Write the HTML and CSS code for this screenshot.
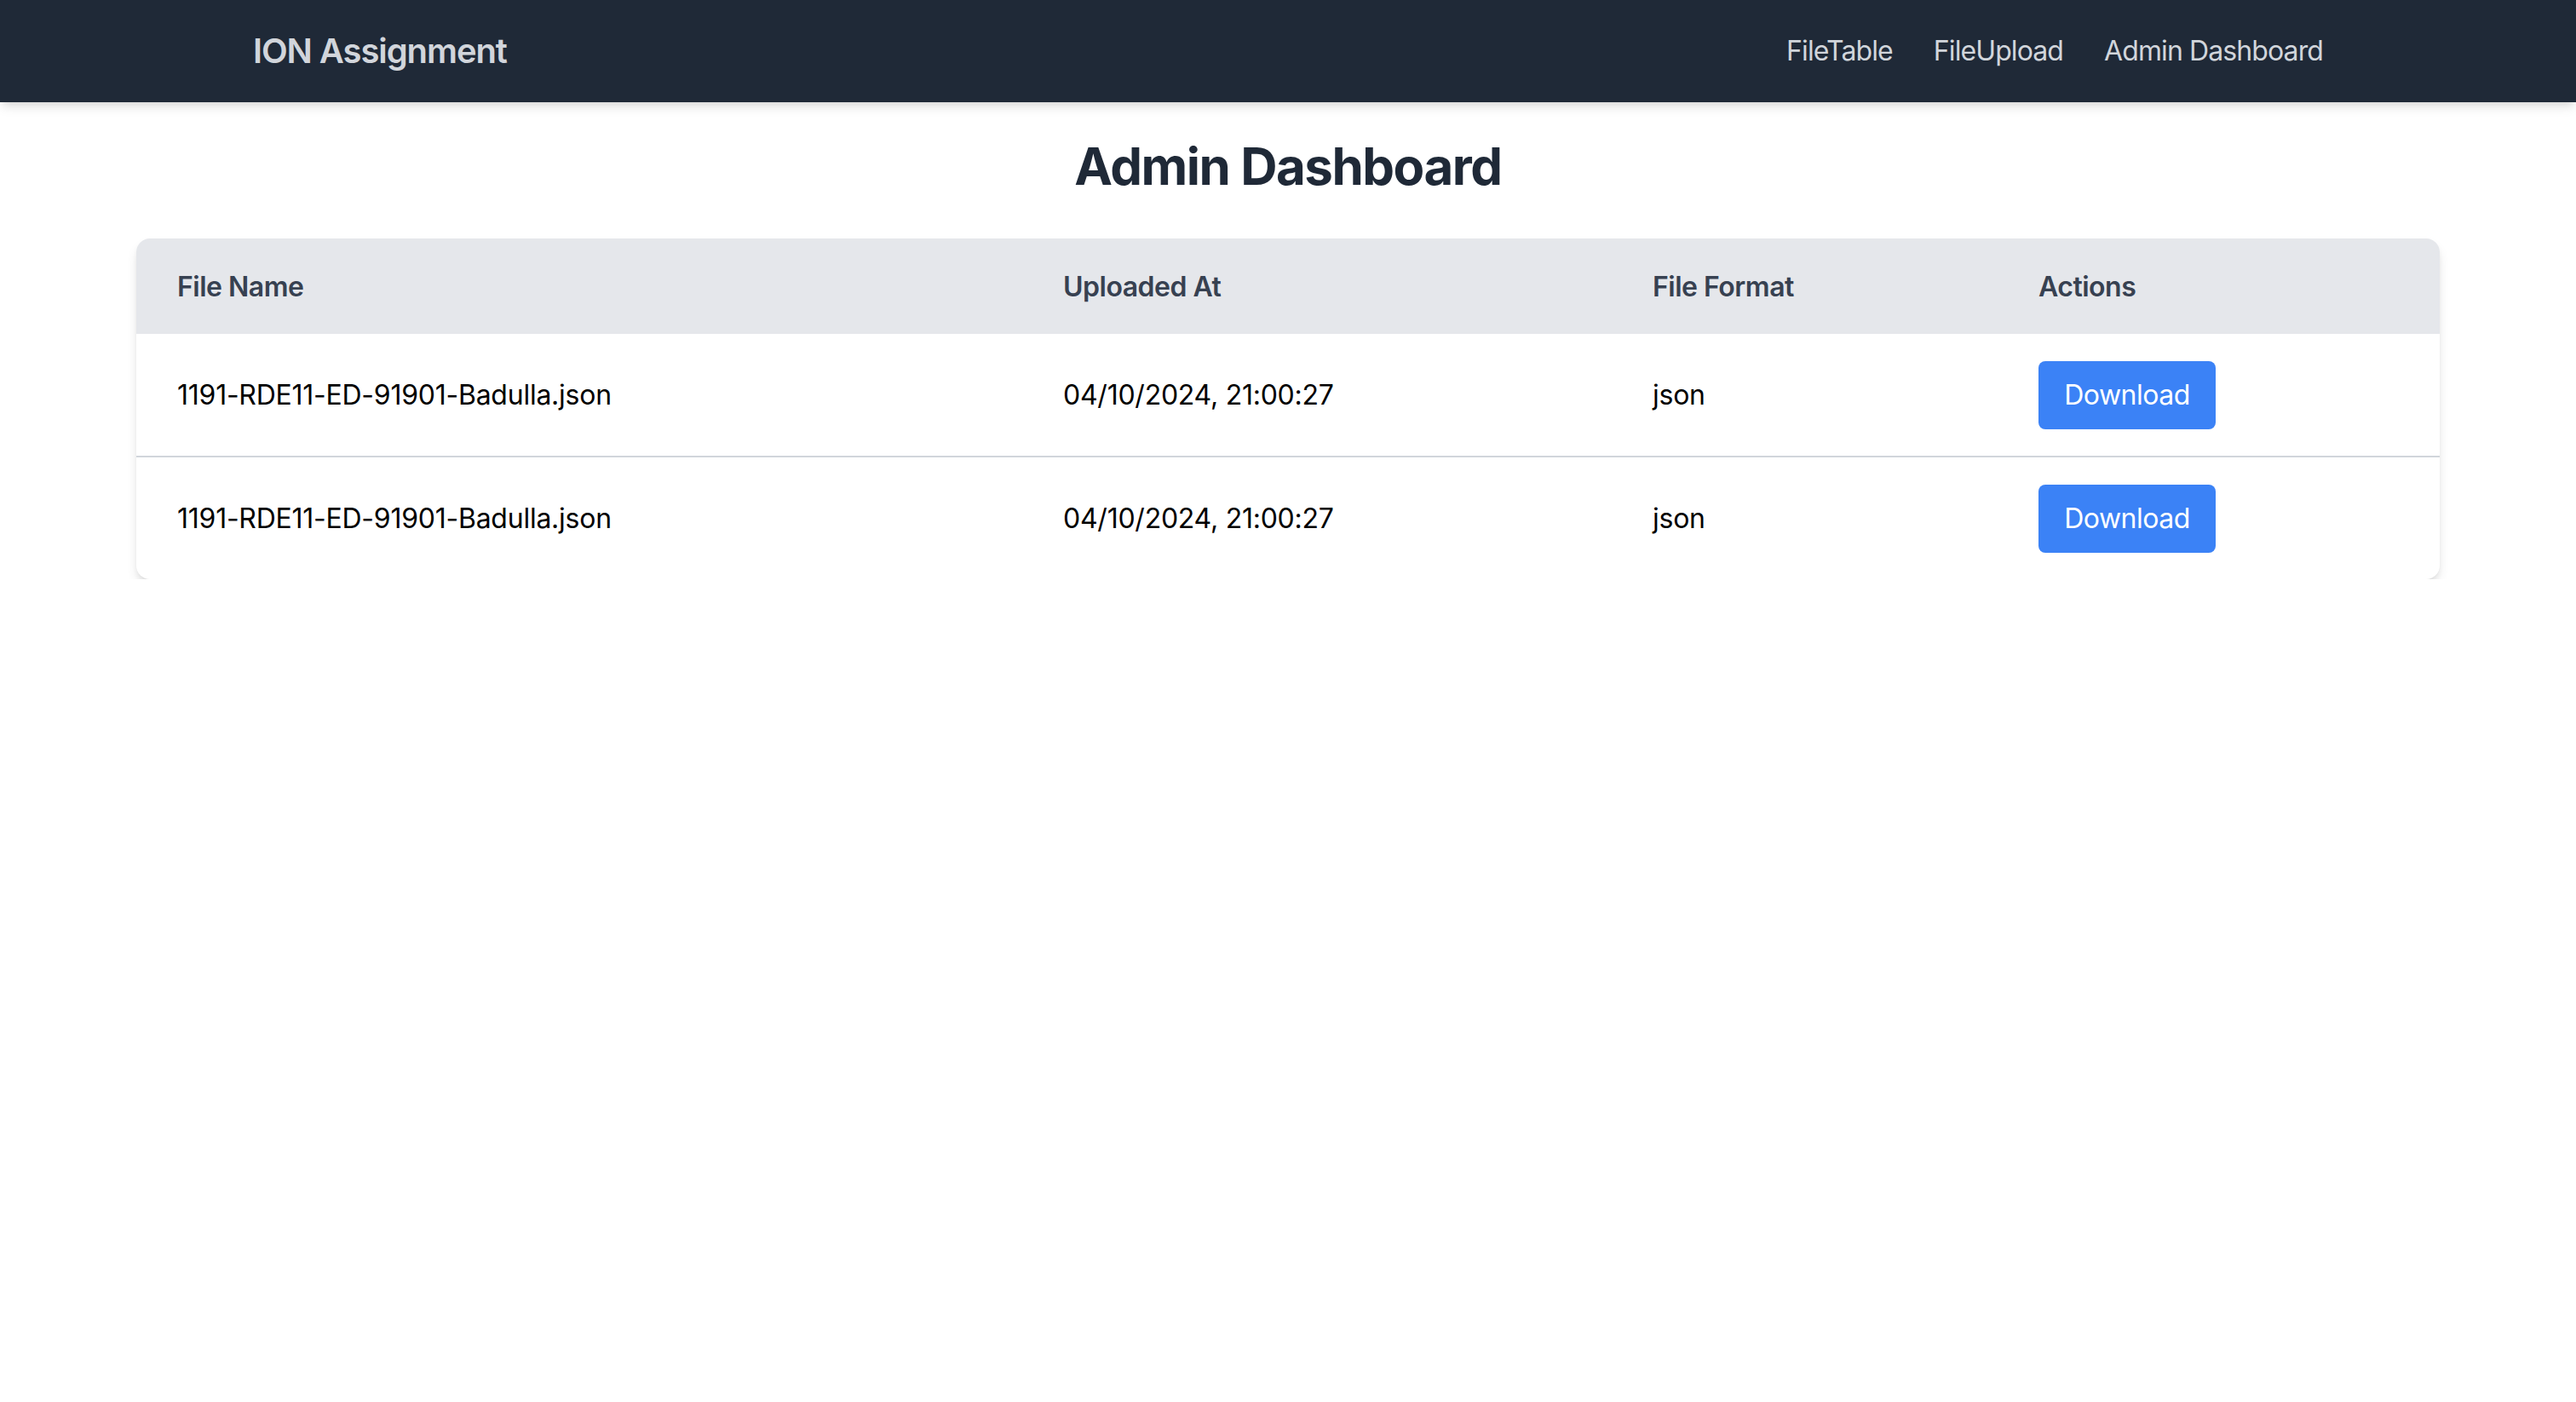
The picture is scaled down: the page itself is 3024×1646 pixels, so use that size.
FILE: index.html
```html
<!DOCTYPE html>
<html lang="en">
<head>
<meta charset="utf-8">
<title>ION Assignment</title>
<link rel="stylesheet" href="styles.css">
</head>
<body>
<nav class="navbar">
  <div class="nav-inner">
    <a class="brand" href="#">ION Assignment</a>
    <div class="nav-links">
      <a href="#">FileTable</a>
      <a href="#">FileUpload</a>
      <a href="#">Admin Dashboard</a>
    </div>
  </div>
</nav>
<main class="main">
  <h1 class="title">Admin Dashboard</h1>
  <div class="card">
    <table class="table">
      <colgroup>
        <col class="c1"><col class="c2"><col class="c3"><col class="c4">
      </colgroup>
      <thead>
        <tr>
          <th>File Name</th>
          <th>Uploaded At</th>
          <th>File Format</th>
          <th>Actions</th>
        </tr>
      </thead>
      <tbody>
        <tr>
          <td>1191-RDE11-ED-91901-Badulla.json</td>
          <td>04/10/2024, 21:00:27</td>
          <td>json</td>
          <td><button class="btn">Download</button></td>
        </tr>
        <tr>
          <td>1191-RDE11-ED-91901-Badulla.json</td>
          <td>04/10/2024, 21:00:27</td>
          <td>json</td>
          <td><button class="btn">Download</button></td>
        </tr>
      </tbody>
    </table>
  </div>
</main>
</body>
</html>
```
FILE: styles.css
```css
* { box-sizing: border-box; }
html, body { margin: 0; padding: 0; background: #ffffff; }
body { font-family: Inter, "Liberation Sans", Arial, sans-serif; color: #000; }
a { text-decoration: none; color: inherit; }

.navbar {
  background: #1f2937;
  height: 120px;
  box-shadow: 0 8px 12px -2px rgba(0,0,0,0.1), 0 4px 8px -4px rgba(0,0,0,0.1);
  position: relative;
  z-index: 1;
}
.nav-inner {
  height: 100%;
  padding: 0 297px 0 297px;
  display: flex;
  align-items: center;
  justify-content: space-between;
}
.brand {
  color: #d1d5db;
  font-size: 40px;
  font-weight: 600;
  line-height: 56px;
  letter-spacing: -1.1px;
}
.nav-links { display: flex; gap: 48px; }
.nav-links a {
  color: #d1d5db;
  font-size: 32px;
  line-height: 48px;
  letter-spacing: -0.9px;
}

.main { padding: 39px 160px 0 160px; }
.title {
  margin: 0 0 49px 0;
  text-align: center;
  font-size: 60px;
  line-height: 72px;
  font-weight: 700;
  color: #1f2937;
  letter-spacing: -1.5px;
}
.card {
  background: #fff;
  border-radius: 16px;
  overflow: hidden;
  box-shadow: 0 8px 14px -2px rgba(0,0,0,0.12), 0 4px 8px -4px rgba(0,0,0,0.12);
}
.table {
  width: 100%;
  border-collapse: collapse;
  table-layout: fixed;
}
.c1 { width: 1040px; }
.c2 { width: 692px; }
.c3 { width: 453px; }
.table thead tr { background: #e5e7eb; }
.table th {
  text-align: left;
  height: 112px;
  padding: 0 48px;
  font-size: 32px;
  font-weight: 600;
  color: #374151;
  letter-spacing: -0.5px;
}
.table td {
  height: 144px;
  padding: 0 48px;
  font-size: 32px;
  color: #000;
  letter-spacing: -0.25px;
  white-space: nowrap;
}
.table tbody tr + tr { border-top: 2px solid #d1d5db; }
.btn {
  font-family: inherit;
  background: #3b82f6;
  color: #fff;
  border: 0;
  border-radius: 8px;
  height: 80px;
  width: 208px;
  font-size: 32px;
  line-height: 48px;
  letter-spacing: -0.5px;
  padding: 0;
  display: block;
}
```
